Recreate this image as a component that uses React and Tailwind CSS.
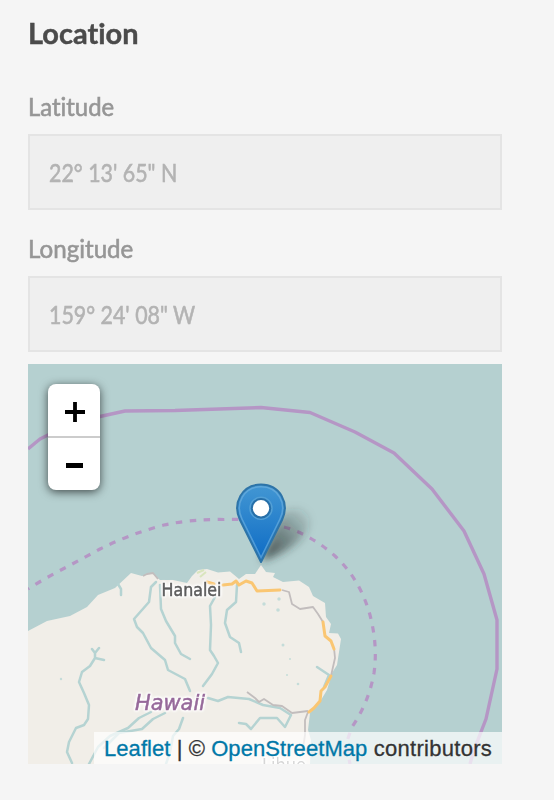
const OUTER = "M28 449L40 439L50 434L100 416.500L125 411L175 410.500L261 407.500L310 412.500L355 432L394 453L432 489L464 531L484 574L497 620V669L486 719L474 750L470 764";
const INNER_WEST = "M28 589C48 576 75 563 100 549Q130 534 164 525Q192 519 224 519.500Q258 518 287 527";
const INNER_EAST = "M284 527Q310 534 335 556Q360 579 370 615Q378 646 374 673Q369 702 352 727L346 744L350 764";
const COAST = "M28 631L47 621L70 616L87 607L98 595L115 588L131 573L142 576L152 573L160 580L173 580L187 583L192 576L198 570L207 569L218 572.500L230 571.500L239 579L246 574L255 574L261 565L266 572L275 573L273 577L283 582L299 580.500L309 587L313 596L325 603L326 617L331 624L329 633L338 633.500L341 639L337 665L332 673L327 690L318 705L310 713L308 730L311 740L310 764H28Z";
const RIVERS = [
  "M118 584L121 589V595",
  "M156 582L151 587L149 602L134 619L137 627L143 633L151 648L165 660L168 670L185 679L190 691",
  "M160 585L161 609L166 621L175 636V643L181 654L190 659",
  "M215 597L210 606L211 625L210 650L214 656L218 663L212 674L203 686",
  "M237 585L236 602L227 610L225 623L230 637L239 643L241 652",
  "M92 649L95 653L99 648M95 653V658L104 660M95 658L90 666L82 672L79 682L84 693L89 705L88 719L84 725L76 728L69 742L67 752L72 763",
  "M151 712L139 718L128 728L110 736L98 747L89 764",
  "M165 713L153 719L142 729L119 733L104 748",
  "M183 718L179 729L173 736L170 752L166 764",
  "M208 698L218 701L228 697L249 699L263 705L280 708L291 715L285 727L277 718L260 718L251 729L246 724L239 723",
  "M317 667L329 675L324 687",
];
const ROADS = [
  "M143 576L147 574L153 573L158 579",
  "M282 590L289 592L292 604L300 609L313 607L318 614L323 622",
  "M334 648L335 658L331 676",
  "M247 692L255 698L259 702L264 699L273 705L282 706L292 713L308 711",
  "M308 712L305 720L305 735L302 755",
];
const HIGHWAYS = [
  "M207 582L214 584M223 585L232 584L236 581L239 585L246 581L252 583L257 591L280 590",
  "M323 622L325 636L331 641L334 649",
  "M331 676L325 687L321 691L320 701L314 708L309 712",
];

const HALO = "[filter:drop-shadow(0_0_1px_#fff)_drop-shadow(0_0_1px_#fff)_drop-shadow(0_0_1px_#fff)]";

function MapCanvas() {
  return (
    <svg className="block h-full w-full" viewBox="28 364 474 400">
      <defs>
        <linearGradient id="pin" x1="0" y1="0" x2="0" y2="1">
          <stop offset="0" stopColor="#4397d3" />
          <stop offset=".9" stopColor="#126fc6" />
        </linearGradient>
        <linearGradient id="shade" x1="0" y1="1" x2=".9" y2="0">
          <stop offset="0" stopColor="#26302f" stopOpacity=".85" />
          <stop offset=".45" stopColor="#26302f" stopOpacity=".5" />
          <stop offset="1" stopColor="#26302f" stopOpacity=".05" />
        </linearGradient>
        <filter id="soft" x="-50%" y="-50%" width="200%" height="200%">
          <feGaussianBlur stdDeviation="4" />
        </filter>
      </defs>
      <rect x="28" y="364" width="474" height="400" fill="#b5d0d0" />
      <path d={COAST} fill="#f1eee8" />
      <g fill="none" strokeLinejoin="round">
        <g stroke="#b5d3d2" strokeWidth="2.500" strokeLinecap="round">
          {RIVERS.map((d) => <path key={d} d={d} />)}
        </g>
        <g fill="#c4dcd9">
          <circle cx="264" cy="604" r="1.700" />
          <circle cx="279" cy="599" r="1.700" />
          <circle cx="278" cy="610" r="1.800" />
          <circle cx="283" cy="645" r="1.500" />
          <circle cx="61" cy="679" r="1.200" />
          <circle cx="298" cy="684" r="1.300" />
          <circle cx="287" cy="675" r="1" />
          <circle cx="290" cy="659" r="1" />
        </g>
        <path d="M197 573L204 570M200 577L206 572" stroke="#d9e5bd" strokeWidth="2" />
        <g stroke="#c2bdbd" strokeWidth="1.800">
          {ROADS.map((d) => <path key={d} d={d} />)}
        </g>
        <g stroke="#fac672" strokeWidth="3" strokeLinecap="round">
          {HIGHWAYS.map((d) => <path key={d} d={d} />)}
        </g>
        <g stroke="#b596c5">
          <path d={OUTER} strokeWidth="3.400" />
          <path d={INNER_WEST} strokeWidth="3.200" strokeDasharray="6.500 7.500" strokeDashoffset="5" />
          <path d={INNER_EAST} strokeWidth="3.200" strokeDasharray="6.500 7.500" />
        </g>
      </g>
      <g className={HALO} strokeWidth=".5">
        <text x="262" y="771" textLength="44" lengthAdjust="spacingAndGlyphs" fontFamily="DejaVu Sans, sans-serif" fontSize="17" fill="#777">Lihue</text>
        <text x="161.500" y="595.500" textLength="60" lengthAdjust="spacingAndGlyphs" fontFamily="DejaVu Sans, sans-serif" fontSize="17" fill="#5c5c5c" stroke="#5c5c5c">Hanalei</text>
        <text x="135" y="710" textLength="70" lengthAdjust="spacingAndGlyphs" fontFamily="DejaVu Sans, sans-serif" fontStyle="italic" fontSize="21" fill="#96699a" stroke="#96699a">Hawaii</text>
      </g>
      <path d="M261 561L276 524Q286 505 303 510Q317 520 300 540Q284 554 261 561Z" fill="url(#shade)" filter="url(#soft)" />
      <path d="M261 562L240 520C232 503 242 484.500 261 484.500S290 503 282 520Z" fill="url(#pin)" stroke="#2e74a8" strokeWidth="2" strokeLinejoin="round" />
      <path d="M261 557.500L242 519C234.500 503.500 244 486.800 261 486.800S287.500 503.500 280 519Z" fill="none" stroke="#74b4e0" strokeOpacity=".6" strokeWidth="1.600" />
      <circle cx="261" cy="508.300" r="11" fill="none" stroke="#529fd5" strokeWidth="1.500" />
      <circle cx="261" cy="508.300" r="9.200" fill="#fff" stroke="#276fa8" strokeWidth="2" />
    </svg>
  );
}

function Field({ label, value }) {
  return (
    <div className="flex h-[142px] flex-col">
      <label className="h-[42px] text-[25px] leading-[28px] text-[#969696]">{label}</label>
      <div className="flex h-[76px] items-center border-2 border-[#e4e4e4] bg-[#efefef] pt-[2px] pl-[19px] text-[25px] text-[#b3b3b3]">
        {value}
      </div>
    </div>
  );
}

const TEXT = "inline-block origin-left whitespace-nowrap [-webkit-text-stroke:0.6px_currentColor]";

export default function App() {
  return (
    <main className="h-[800px] w-[554px] overflow-hidden bg-[#f5f5f5] px-7 pt-[18px] font-[Lato,sans-serif] [font-variant-ligatures:none]">
      <h2 className="h-[74px] text-[28px] leading-[30px] font-bold text-[#4b4b4b]"><span className="inline-block origin-left scale-x-[1.035] [-webkit-text-stroke:0.4px_currentColor]">Location</span></h2>
      <div className="w-[474px]">
        <Field label={<span className={`${TEXT} scale-x-[0.955]`}>Latitude</span>} value={<span className={`${TEXT} scale-x-[0.855]`}>22° 13' 65" N</span>} />
        <Field label={<span className={`${TEXT} scale-x-[0.965]`}>Longitude</span>} value={<span className={`${TEXT} scale-x-[0.855]`}>159° 24' 08" W</span>} />
        <section className="relative -mt-[12px] h-[400px]">
          <MapCanvas />
          <div className="absolute top-5 left-5 h-[106px] w-[52px] rounded-lg bg-white shadow-[0_2px_10px_rgba(0,0,0,0.65)]">
            <button aria-label="Zoom in" className="flex h-[54px] w-full items-center justify-center border-b-2 border-[#ccc]">
              <svg width="22" height="22" viewBox="0 0 22 22" className="mt-[4px] ml-px"><path d="M1 11H21M11 1V21" stroke="#000" strokeWidth="3.800" /></svg>
            </button>
            <button aria-label="Zoom out" className="flex h-[52px] w-full items-center justify-center">
              <span className="mt-[3px] h-[5px] w-[17px] bg-black" />
            </button>
          </div>
          <div className="absolute right-0 bottom-0 flex h-8 w-[408px] items-center bg-white/70 pl-[10px] font-['Liberation_Sans',sans-serif] text-[22px] tracking-[0.07px] whitespace-pre text-[#333] [-webkit-text-stroke:0.3px_currentColor]">
            <a className="text-[#0078a8]">Leaflet</a> | © <a className="text-[#0078a8]">OpenStreetMap</a><span className="tracking-[0.28px]"> contributors</span>
          </div>
        </section>
      </div>
    </main>
  );
}
